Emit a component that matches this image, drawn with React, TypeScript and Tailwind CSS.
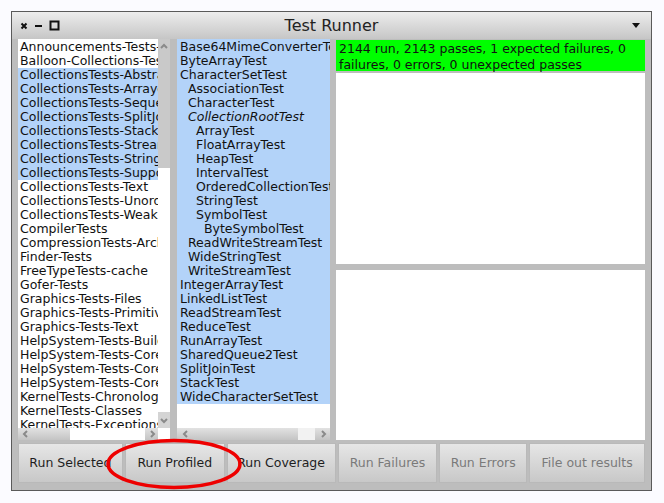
import React from "react";

const FONT = { fontFamily: '"DejaVu Sans", "Liberation Sans", sans-serif' };

const leftItems = [
  "Announcements-Tests-Core",
  "Balloon-Collections-Tests",
  "CollectionsTests-Abstract",
  "CollectionsTests-Arrayed",
  "CollectionsTests-Sequenceable",
  "CollectionsTests-SplitJoin",
  "CollectionsTests-Stack",
  "CollectionsTests-Streams",
  "CollectionsTests-Strings",
  "CollectionsTests-Support",
  "CollectionsTests-Text",
  "CollectionsTests-Unordered",
  "CollectionsTests-Weak",
  "CompilerTests",
  "CompressionTests-Archive",
  "Finder-Tests",
  "FreeTypeTests-cache",
  "Gofer-Tests",
  "Graphics-Tests-Files",
  "Graphics-Tests-Primitives",
  "Graphics-Tests-Text",
  "HelpSystem-Tests-Builders",
  "HelpSystem-Tests-Core-Model",
  "HelpSystem-Tests-Core-UI",
  "HelpSystem-Tests-Core-Utilities",
  "KernelTests-Chronology",
  "KernelTests-Classes",
  "KernelTests-Exceptions",
];

const midItems: { t: string; i: number; it?: boolean }[] = [
  { t: "Base64MimeConverterTest", i: 0 },
  { t: "ByteArrayTest", i: 0 },
  { t: "CharacterSetTest", i: 0 },
  { t: "AssociationTest", i: 1 },
  { t: "CharacterTest", i: 1 },
  { t: "CollectionRootTest", i: 1, it: true },
  { t: "ArrayTest", i: 2 },
  { t: "FloatArrayTest", i: 2 },
  { t: "HeapTest", i: 2 },
  { t: "IntervalTest", i: 2 },
  { t: "OrderedCollectionTest", i: 2 },
  { t: "StringTest", i: 2 },
  { t: "SymbolTest", i: 2 },
  { t: "ByteSymbolTest", i: 3 },
  { t: "ReadWriteStreamTest", i: 1 },
  { t: "WideStringTest", i: 1 },
  { t: "WriteStreamTest", i: 1 },
  { t: "IntegerArrayTest", i: 0 },
  { t: "LinkedListTest", i: 0 },
  { t: "ReadStreamTest", i: 0 },
  { t: "ReduceTest", i: 0 },
  { t: "RunArrayTest", i: 0 },
  { t: "SharedQueue2Test", i: 0 },
  { t: "SplitJoinTest", i: 0 },
  { t: "StackTest", i: 0 },
  { t: "WideCharacterSetTest", i: 0 },
];

function Chevron({ dir }: { dir: "up" | "down" | "left" | "right" }) {
  const pts: Record<string, string> = {
    up: "2,6 5,3 8,6",
    down: "2,4 5,7 8,4",
    left: "6,2 3,5 6,8",
    right: "4,2 7,5 4,8",
  };
  return (
    <svg width="10" height="10" viewBox="0 0 10 10">
      <polyline points={pts[dir]} fill="none" stroke="#8a8a8a" strokeWidth="2" />
    </svg>
  );
}

function Btn({ label, w, disabled }: { label: string; w: string; disabled?: boolean }) {
  return (
    <div
      className={`${w} h-full flex items-center justify-center border border-[#b9b9b9] bg-gradient-to-b from-[#e6e6e6] to-[#c8c8c8] text-[12.5px] ${
        disabled ? "text-[#7a7a7a]" : "text-[#1e1e1e]"
      } overflow-hidden whitespace-nowrap`}
    >
      {label}
    </div>
  );
}

export default function App() {
  return (
    <div className="w-[664px] h-[503px] bg-[#fbfbff] relative overflow-hidden" style={FONT}>
      <div className="absolute left-[11px] top-[11px] w-[641px] h-[480px] border border-[#5a5a5a] bg-[#bdbdbd] flex flex-col">
        {/* title bar */}
        <div className="h-[27px] shrink-0 bg-gradient-to-b from-[#ededed] to-[#c6c6c6] flex items-center relative">
          <div className="flex items-center gap-[6px] pl-[8px]">
            <svg width="8" height="8" viewBox="0 0 8 8">
              <path d="M1.5 1.5 L6.5 6.5 M6.5 1.5 L1.5 6.5" stroke="#111" strokeWidth="2" />
            </svg>
            <svg width="9" height="8" viewBox="0 0 9 8">
              <rect x="1" y="3" width="7" height="2" fill="#111" />
            </svg>
            <svg width="11" height="11" viewBox="0 0 11 11">
              <rect x="1.5" y="1.5" width="8" height="8" fill="none" stroke="#111" strokeWidth="2" />
            </svg>
          </div>
          <div className="absolute left-0 right-0 top-0 bottom-0 flex items-center justify-center text-[16px] text-[#222]">
            Test Runner
          </div>
          <div className="ml-auto pr-[11px]">
            <svg width="8" height="5" viewBox="0 0 8 5">
              <polygon points="0,0 8,0 4,5" fill="#111" />
            </svg>
          </div>
        </div>

        {/* main area */}
        <div className="flex px-[6px] h-[401px] shrink-0">
          {/* left list */}
          <div className="w-[152px] h-full flex flex-col bg-white">
            <div className="flex flex-1 min-h-0">
              <div className="w-[140px] overflow-hidden pt-px">
                {leftItems.map((t, i) => (
                  <div
                    key={i}
                    className={`h-[14px] leading-[14px] text-[12.5px] pl-[2px] whitespace-nowrap text-[#111] ${
                      i >= 2 && i <= 9 ? "bg-[#b3d3f9]" : ""
                    }`}
                  >
                    {t}
                  </div>
                ))}
              </div>
              <div className="w-[12px] flex flex-col">
                <div className="h-[129px] bg-[#c9c9c9] flex justify-center pt-[3px]">
                  <Chevron dir="up" />
                </div>
                <div className="flex-1 bg-white" />
                <div className="h-[16px] bg-[#d4d4d4] flex justify-center items-center">
                  <Chevron dir="down" />
                </div>
              </div>
            </div>
            <div className="h-[12px] flex shrink-0">
              <div className="w-[52px] bg-gradient-to-b from-[#e2e2e2] to-[#c4c4c4] flex items-center pl-[3px]">
                <Chevron dir="left" />
              </div>
              <div className="w-[75px] bg-white" />
              <div className="w-[13px] bg-gradient-to-b from-[#e2e2e2] to-[#c4c4c4] flex items-center justify-center">
                <Chevron dir="right" />
              </div>
              <div className="w-[12px] bg-white" />
            </div>
          </div>

          <div className="w-[7px]" />

          {/* middle list */}
          <div className="w-[153px] h-full flex flex-col bg-white">
            <div className="flex-1 min-h-0 overflow-hidden">
              <div className="h-px bg-[#b3d3f9]" />
              {midItems.map((m, i) => (
                <div
                  key={i}
                  className={`h-[14px] leading-[14px] text-[12.5px] whitespace-nowrap text-[#111] bg-[#b3d3f9] ${
                    m.it ? "italic" : ""
                  } ${m.i === 0 ? "pl-[3px]" : m.i === 1 ? "pl-[11px]" : m.i === 2 ? "pl-[19px]" : "pl-[27px]"}`}
                >
                  {m.t}
                </div>
              ))}
            </div>
            <div className="h-[12px] flex shrink-0">
              <div className="w-[121px] bg-gradient-to-b from-[#e2e2e2] to-[#c4c4c4] flex items-center pl-[4px]">
                <Chevron dir="left" />
              </div>
              <div className="w-[17px] bg-[#f2f2f2]" />
              <div className="w-[15px] bg-gradient-to-b from-[#e2e2e2] to-[#c4c4c4] flex items-center justify-center">
                <Chevron dir="right" />
              </div>
            </div>
          </div>

          <div className="w-[6px]" />

          {/* right column */}
          <div className="w-[309px] h-full flex flex-col pt-px">
            <div className="h-[31px] bg-[#00ff00] text-[12.5px] leading-[16px] text-[#111] pl-[3px] pt-px">
              2144 run, 2143 passes, 1 expected failures, 0 failures, 0 errors, 0 unexpected passes
            </div>
            <div className="h-[2px]" />
            <div className="h-[191px] bg-white" />
            <div className="h-[6px]" />
            <div className="flex-1 bg-white" />
          </div>
        </div>

        {/* buttons */}
        <div className="flex px-[6px] pt-[3px] h-[43px] gap-[2px] shrink-0">
          <Btn label="Run Selected" w="w-[105px]" />
          <Btn label="Run Profiled" w="w-[100px]" />
          <Btn label="Run Coverage" w="w-[109px]" />
          <Btn label="Run Failures" w="w-[100px]" disabled />
          <Btn label="Run Errors" w="w-[88px]" disabled />
          <Btn label="File out results" w="w-[116px]" disabled />
        </div>
      </div>

      {/* red annotation ellipse */}
      <svg className="absolute left-0 top-0 pointer-events-none" width="664" height="503">
        <ellipse cx="174" cy="464" rx="66" ry="23.5" fill="none" stroke="#ee0000" strokeWidth="3.5" />
      </svg>
    </div>
  );
}
